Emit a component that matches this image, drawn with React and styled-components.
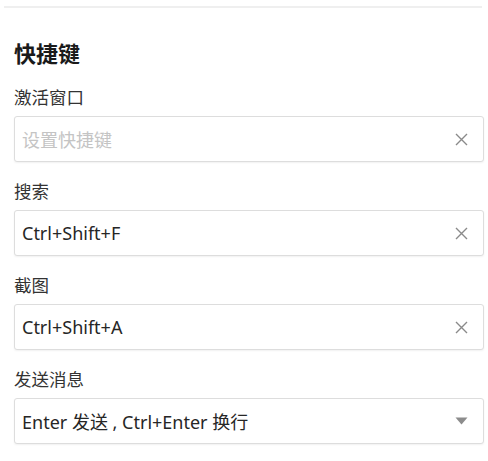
import React from 'react';
import styled, { createGlobalStyle } from 'styled-components';

const GlobalStyle = createGlobalStyle`
  body {
    margin: 0;
    background: #ffffff;
    font-family: "Noto Sans", "Noto Sans CJK SC", sans-serif;
  }
`;

const fields = [
  { label: '激活窗口', value: '', placeholder: '设置快捷键', kind: 'clear' },
  { label: '搜索', value: 'Ctrl+Shift+F', kind: 'clear' },
  { label: '截图', value: 'Ctrl+Shift+A', kind: 'clear' },
  { label: '发送消息', value: 'Enter 发送 , Ctrl+Enter 换行', kind: 'select' },
];

const ClearIcon = () => (
  <svg width="13" height="13" viewBox="0 0 13 13">
    <path d="M1 1 L12 12 M12 1 L1 12" stroke="#8a8a8a" strokeWidth="1.4" fill="none" />
  </svg>
);

const CaretIcon = () => (
  <svg width="13" height="8" viewBox="0 0 13 8">
    <path d="M0.5 0.5 H12.5 L6.5 7.5 Z" fill="#8c8c8c" />
  </svg>
);

const App = () => {
  return (
    <Page>
      <GlobalStyle />
      <Divider />
      <Heading>快捷键</Heading>
      {fields.map((f) => (
        <Field key={f.label}>
          <Label>{f.label}</Label>
          <InputBox>
            <Value $empty={!f.value}>{f.value || f.placeholder}</Value>
            <IconSlot>{f.kind === 'select' ? <CaretIcon /> : <ClearIcon />}</IconSlot>
          </InputBox>
        </Field>
      ))}
    </Page>
  );
};

const Page = styled.div`
  width: 488px;
  height: 461px;
  padding: 6px 4px 0 14px;
  box-sizing: border-box;
  overflow: hidden;
`;

const Divider = styled.div`
  height: 2px;
  margin-left: -10px;
  margin-right: 2px;
  background: #efefef;
`;

const Heading = styled.h2`
  margin: 30px 0 21px;
  font-size: 22px;
  line-height: 28px;
  font-weight: 700;
  color: #1a1a1a;
  font-family: "Noto Sans CJK SC", sans-serif;
`;

const Field = styled.div`
  display: flex;
  flex-direction: column;
  gap: 9px;
  margin-bottom: 19px;
`;

const Label = styled.div`
  font-size: 17.5px;
  line-height: 20px;
  color: #333333;
  font-family: "Noto Sans CJK SC", sans-serif;
`;

const InputBox = styled.div`
  height: 46px;
  box-sizing: border-box;
  display: flex;
  align-items: center;
  justify-content: space-between;
  padding: 0 14px 0 7px;
  border: 1px solid #dddddd;
  border-radius: 3px;
  box-shadow: 0 1px 2px rgba(0, 0, 0, 0.06);
  background: #ffffff;
`;

const Value = styled.span`
  font-size: 18px;
  color: ${(p) => (p.$empty ? '#c4c4c4' : '#262626')};
  white-space: nowrap;
`;

const IconSlot = styled.span`
  display: flex;
  align-items: center;
  justify-content: center;
  width: 16px;
`;

export default App;
